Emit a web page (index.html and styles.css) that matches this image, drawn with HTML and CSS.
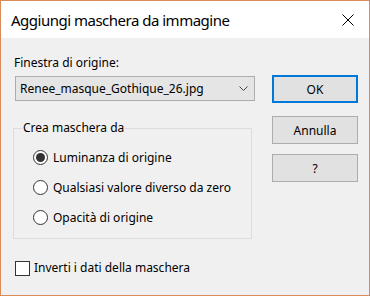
FILE: index.html
```html
<!DOCTYPE html>
<html lang="it">
    <head>
        <title>Aggiungi maschera da immagine</title>
        <link rel="stylesheet" href="styles.css">
    </head>
    <body>
        <div class="dialog">
            <div class="titlebar">
                <span class="title">Aggiungi maschera da immagine</span>
                <svg class="close" width="12" height="12" viewBox="0 0 12 12">
                    <path d="M0.5 0.5 L11.5 11.5 M11.5 0.5 L0.5 11.5" stroke="#000" stroke-width="1"/>
                </svg>
            </div>

            <div class="content">
                <div class="main">
                    <div class="field-label">Finestra di origine:</div>
                    <div class="combo">
                        <span>Renee_masque_Gothique_26.jpg</span>
                        <svg class="chevron" width="9" height="5" viewBox="0 0 9 5">
                            <path d="M0.5 0.5 L4.5 4.5 L8.5 0.5" stroke="#444" stroke-width="1" fill="none"/>
                        </svg>
                    </div>

                    <fieldset class="group">
                        <legend>Crea maschera da</legend>
                        <div class="radio-list">
                            <div class="radio-row"><span class="radio checked"></span>Luminanza di origine</div>
                            <div class="radio-row"><span class="radio"></span>Qualsiasi valore diverso da zero</div>
                            <div class="radio-row"><span class="radio"></span>Opacità di origine</div>
                        </div>
                    </fieldset>

                    <div class="check-row"><span class="checkbox"></span>Inverti i dati della maschera</div>
                </div>

                <div class="buttons">
                    <div class="button default">OK</div>
                    <div class="button">Annulla</div>
                    <div class="button">?</div>
                </div>
            </div>
        </div>
    </body>
</html>
```

FILE: styles.css
```css
body {
    margin: 0;
    font-family: "Noto Sans", "Open Sans", sans-serif;
    font-size: 12px;
    color: #000;
}
.dialog {
    width: 368px;
    height: 294px;
    border: 1px solid #da8b5c; /* accent window frame */
    background: #f0f0f0;
}
.titlebar {
    height: 37px;
    background: #fff;
    display: flex;
    align-items: center;
    justify-content: space-between;
    padding: 0 15px 0 10px;
}
.title {
    font-size: 15px;
    letter-spacing: -0.5px;
}
.close {
    display: block;
}
.content {
    display: flex;
    gap: 17px;
    padding: 17px 0 0 12px;
}
.main {
    width: 242px;
}
.field-label {
    line-height: 16px;
    padding-left: 1px;
}
.combo {
    margin: 5px 0 0 2px;
    height: 23px;
    border: 1px solid #adadad;
    background: #e5e5e5;
    display: flex;
    align-items: center;
    justify-content: space-between;
    padding: 0 6px 0 4px;
}
.chevron {
    display: block;
}
.group {
    margin: 19px 3px 0 0;
    border: 1px solid #dcdcdc;
    padding: 0 8px 6px 8px;
}
.group legend {
    padding: 0 1px;
    line-height: 16px;
}
.radio-list {
    padding: 6px 0 0 11px;
}
.radio-row {
    height: 30px;
    display: flex;
    align-items: center;
    gap: 5px;
}
.radio {
    width: 13px;
    height: 13px;
    border: 1px solid #333;
    border-radius: 50%;
    background: #fff;
    position: relative;
}
.radio.checked::after {
    content: "";
    position: absolute;
    left: 2px;
    top: 2px;
    width: 9px;
    height: 9px;
    border-radius: 50%;
    background: #333;
}
.check-row {
    margin: 21px 0 0 2px;
    display: flex;
    align-items: center;
    gap: 4px;
    line-height: 16px;
}
.checkbox {
    width: 13px;
    height: 13px;
    border: 1px solid #333;
    background: #fff;
}
.buttons {
    margin-top: 20px;
    display: flex;
    flex-direction: column;
    gap: 10px;
}
.button {
    width: 84px;
    height: 26px;
    border: 1px solid #adadad;
    background: #e1e1e1;
    display: flex;
    align-items: center;
    justify-content: center;
}
.button.default {
    width: 82px;
    height: 24px;
    border: 2px solid #0078d7;
    margin-bottom: 3px;
}
```
